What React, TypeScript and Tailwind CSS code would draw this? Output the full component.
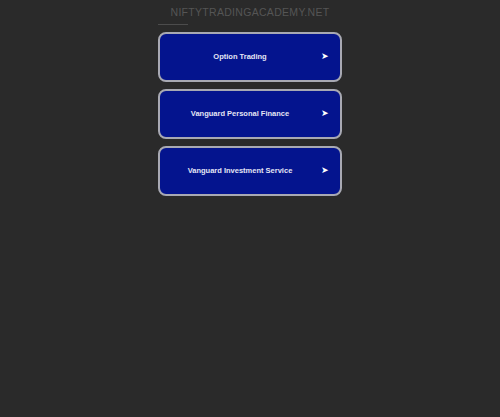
import React from "react";

const items = ["Option Trading", "Vanguard Personal Finance", "Vanguard Investment Service"];

export default function App() {
  return (
    <div className="min-h-[417px] w-full bg-[#2a2a2a]" style={{ fontFamily: '"Liberation Sans", Arial, sans-serif' }}>
      <div className="flex flex-col items-center pt-[6px]">
        <div className="text-[10.5px] leading-[12px] tracking-[0.3px] text-[#555555]">NIFTYTRADINGACADEMY.NET</div>
        <div className="mt-[2px] w-[184px]">
          <div className="h-[8px] flex items-center">
            <div className="h-[1px] w-[30px] bg-[#4c4c4c]" />
          </div>
          <div className="flex flex-col gap-[7px] mt-[4px]">
            {items.map((t) => (
              <div
                key={t}
                className="h-[50px] rounded-[8px] border-2 border-[#a8a9b3] bg-[#04148e] flex items-center"
              >
                <span className="flex-1 text-center pl-[10px] text-[7.5px] font-bold text-[#e4e6f5]">{t}</span>
                <span className="w-[30px] text-center text-[9px] text-white">➤</span>
              </div>
            ))}
          </div>
        </div>
      </div>
    </div>
  );
}
